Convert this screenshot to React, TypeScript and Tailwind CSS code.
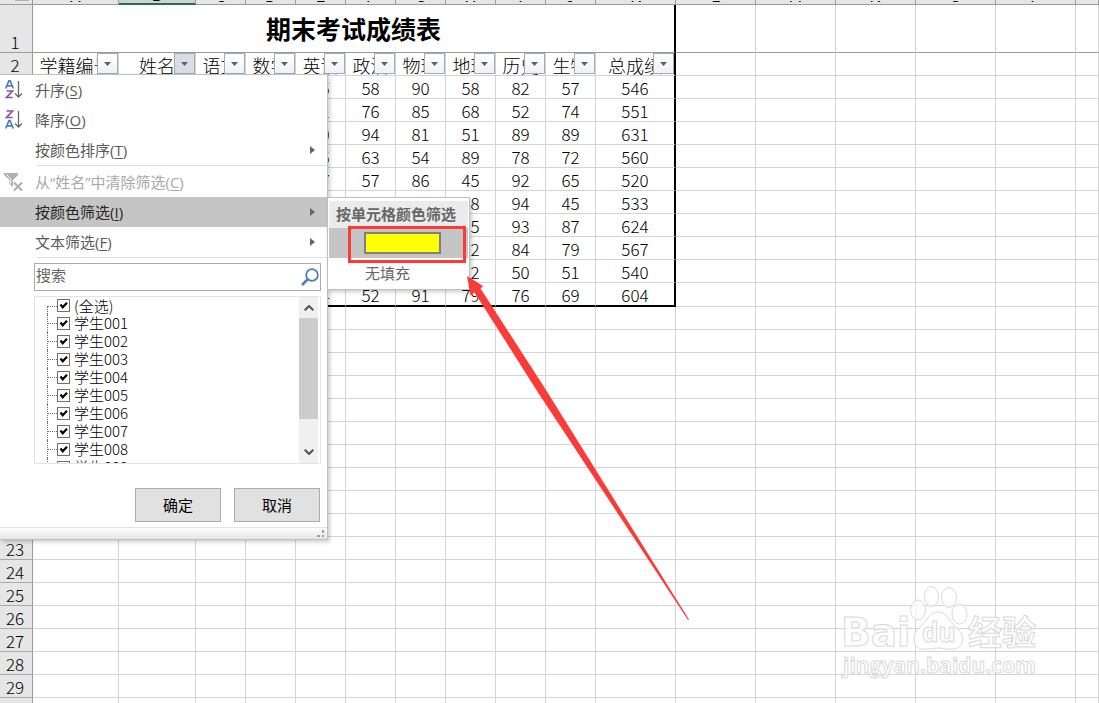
import type { ReactNode } from 'react';

interface FilterHeader {
  label: string;
  active?: boolean;
}

interface MenuItemProps {
  icon?: ReactNode;
  label: string;
  accessKey: string;
  submenu?: boolean;
  highlighted?: boolean;
  disabled?: boolean;
}

const columns = [
  { name: 'A', width: 'w-[86px]' },
  { name: 'B', width: 'w-[77px]' },
  { name: 'C', width: 'w-[50px]' },
  { name: 'D', width: 'w-[50px]' },
  { name: 'E', width: 'w-[50px]' },
  { name: 'F', width: 'w-[50px]' },
  { name: 'G', width: 'w-[50px]' },
  { name: 'H', width: 'w-[50px]' },
  { name: 'I', width: 'w-[50px]' },
  { name: 'J', width: 'w-[50px]' },
  { name: 'K', width: 'w-[80px]' },
  { name: 'L', width: 'w-[80px]' },
  { name: 'M', width: 'w-[80px]' },
  { name: 'N', width: 'w-[80px]' },
  { name: 'O', width: 'w-[80px]' },
  { name: 'P', width: 'w-[80px]' },
  { name: '', width: 'w-auto' },
];

const headers: FilterHeader[] = [
  { label: '学籍编号' },
  { label: '姓名', active: true },
  { label: '语文' },
  { label: '数学' },
  { label: '英语' },
  { label: '政治' },
  { label: '物理' },
  { label: '地理' },
  { label: '历史' },
  { label: '生物' },
  { label: '总成绩' },
];

// columns A to K
const scores = [
  ['', '', '', '', '75', '58', '90', '58', '82', '57', '546'],
  ['', '', '', '', '71', '76', '85', '68', '52', '74', '551'],
  ['', '', '', '', '80', '94', '81', '51', '89', '89', '631'],
  ['', '', '', '', '65', '63', '54', '89', '78', '72', '560'],
  ['', '', '', '', '77', '57', '86', '45', '92', '65', '520'],
  ['', '', '', '', '', '', '', '58', '94', '45', '533'],
  ['', '', '', '', '', '', '', '85', '93', '87', '624'],
  ['', '', '', '', '', '', '', '92', '84', '79', '567'],
  ['', '', '', '', '', '', '', '72', '50', '51', '540'],
  ['', '', '', '', '84', '52', '91', '79', '76', '69', '604'],
];

const students = [
  '(全选)',
  '学生001',
  '学生002',
  '学生003',
  '学生004',
  '学生005',
  '学生006',
  '学生007',
  '学生008',
  '学生009',
];

const emptyRows = Array.from({ length: 18 }, (_, i) => i + 13);

function RowNumber({ n, dark }: { n: number; dark?: boolean }) {
  return (
    <th
      scope="row"
      className={`border-r border-b border-r-[#9b9b9b] bg-[#e6e6e6] p-0 pr-0.5 align-bottom font-light leading-5 ${
        dark ? 'border-b-[#9b9b9b]' : 'border-b-[#ababab]'
      }`}
    >
      {n}
    </th>
  );
}

function Sheet() {
  return (
    <table className="w-full table-fixed border-separate border-spacing-0 text-[17px] font-light">
      <colgroup>
        <col className="w-[33px]" />
        {columns.map((col, i) => (
          <col key={i} className={col.width} />
        ))}
      </colgroup>
      <thead>
        <tr className="h-[5px]">
          <th className="border-r border-b border-[#9b9b9b] bg-[#e6e6e6] p-0">
            <div className="ml-[15px] h-1 w-3.5 border-t border-[#b1b1b1]" />
          </th>
          {columns.map((col, i) => (
            <th
              key={i}
              scope="col"
              className={`border-r border-r-[#9b9b9b] p-0 font-normal ${
                col.name === 'B'
                  ? 'border-b-2 border-b-[#217346] bg-[#d2d2d2]'
                  : 'border-b border-b-[#9b9b9b] bg-[#e6e6e6]'
              }`}
            >
              <div className="flex h-[3px] items-end justify-center overflow-hidden">
                <span className="leading-[18px]">{col.name}</span>
              </div>
            </th>
          ))}
        </tr>
      </thead>
      <tbody>
        <tr className="h-12">
          <RowNumber n={1} dark />
          <td
            colSpan={11}
            className="border-r-2 border-b border-r-black border-b-[#9b9b9b] p-0 pb-0.5 text-center text-[25px] font-bold leading-8"
          >
            期末考试成绩表
          </td>
          {columns.slice(11).map((col, i) => (
            <td key={i} className="border-r border-b border-r-[#d4d4d4] border-b-[#9b9b9b] p-0" />
          ))}
        </tr>
        <tr className="h-[23px]">
          <RowNumber n={2} />
          {headers.map((header, i) => (
            <th
              key={header.label}
              scope="col"
              className={`relative border-b border-b-[#d4d4d4] p-0 text-lg font-light ${
                i === 10 ? 'border-r-2 border-r-black' : 'border-r border-r-[#d4d4d4]'
              }`}
            >
              <div className="h-[22px] overflow-hidden pt-0.5 leading-5 whitespace-nowrap">{header.label}</div>
              <button
                type="button"
                aria-label={`筛选 ${header.label}`}
                className={`absolute top-0 right-0 flex size-[21px] items-center justify-center border border-[#a3abb8] ${
                  header.active
                    ? 'bg-[#d9dee6]'
                    : 'bg-linear-to-b from-white to-[#eef1f8]'
                }`}
              >
                <svg viewBox="0 0 7 4" className="h-1 w-[7px] fill-[#606060]">
                  <path d="M0 0h7L3.5 4z" />
                </svg>
              </button>
            </th>
          ))}
          {columns.slice(11).map((col, i) => (
            <td key={i} className="border-r border-b border-[#d4d4d4] p-0" />
          ))}
        </tr>
        {scores.map((row, r) => {
          const last = r === scores.length - 1;
          return (
            <tr key={r} className={last ? 'h-6' : 'h-[23px]'}>
              <RowNumber n={r + 3} />
              {row.map((value, c) => (
                <td
                  key={c}
                  className={`p-0 pt-0.5 text-center leading-5 ${
                    c === 10 ? 'border-r-2 border-r-black' : 'border-r border-r-[#d4d4d4]'
                  } ${last ? 'border-b-2 border-b-black' : 'border-b border-b-[#d4d4d4]'}`}
                >
                  {value}
                </td>
              ))}
              {columns.slice(11).map((col, i) => (
                <td key={i} className="border-r border-b border-[#d4d4d4] p-0" />
              ))}
            </tr>
          );
        })}
        {emptyRows.map((n) => (
          <tr key={n} className="h-[23px]">
            <RowNumber n={n} />
            {columns.map((col, i) => (
              <td key={i} className="border-r border-b border-[#d4d4d4] p-0" />
            ))}
          </tr>
        ))}
      </tbody>
    </table>
  );
}

function SortIcon({ descending }: { descending?: boolean }) {
  const letterA = 'M0.7 8.5L4 .5h1l3.3 8M2 5.8h5';
  const letterZ = 'M1.5 1h6L1.5 7.5h6.2';
  return (
    <svg viewBox="0 0 18 20" className="ml-px h-5 w-[18px] fill-none" strokeWidth="1.7">
      <path d={descending ? letterZ : letterA} stroke={descending ? '#8a54a8' : '#4a7ebb'} />
      <path
        d={descending ? letterA : letterZ}
        stroke={descending ? '#4a7ebb' : '#8a54a8'}
        transform="translate(0 10)"
      />
      <path d="M13.5 1v16M10 13.5l3.5 3.5 3.5-3.5" stroke="#666" strokeWidth="1.3" />
    </svg>
  );
}

function ClearFilterIcon() {
  return (
    <svg viewBox="0 0 20 20" className="size-5">
      <path d="M0 1h14v2L9 8v7L5.5 12V8L0 3z" fill="#b0b0b0" />
      <path d="M2.5 2.5L6.8 7v4.5" fill="none" stroke="#fff" />
      <path d="M10 10.5l8 8M18 10.5l-8 8" stroke="#b0b0b0" strokeWidth="2.2" />
    </svg>
  );
}

function MenuItem({ icon, label, accessKey, submenu, highlighted, disabled }: MenuItemProps) {
  return (
    <button
      type="button"
      disabled={disabled}
      className={`flex h-[30px] w-full items-center text-left text-[15px] ${
        highlighted ? 'bg-[#c5c5c5] text-[#262626]' : disabled ? 'text-[#a8a8a8]' : 'text-[#5a5a5a]'
      }`}
    >
      <span className="w-[35px] pl-1">{icon}</span>
      <span className="flex-1">
        {label}(<span className="underline underline-offset-2">{accessKey}</span>)
      </span>
      {submenu && (
        <svg viewBox="0 0 5 8" className="mr-3 h-2 w-[5px] fill-[#666]">
          <path d="M0 0l5 4-5 4z" />
        </svg>
      )}
    </button>
  );
}

function StudentList() {
  return (
    <div className="mt-[5px] ml-[34px] flex h-[168px] w-[287px] border border-[#e2e3e6] pr-0.5">
      <ul className="h-[166px] flex-1 overflow-hidden pl-3 text-[15px] text-black">
        {students.map((name, i) => (
          <li key={name} className={`flex items-center ${i === 0 ? 'h-[17px]' : 'h-[18px]'}`}>
            <span
              className={`w-2.5 border-l border-dotted border-[#707070] ${
                i === 0 ? 'h-2 self-end border-t' : 'h-[18px]'
              }`}
            >
              {i > 0 && <span className="block h-[10px] border-b border-dotted border-[#707070]" />}
            </span>
            <label className="flex items-center gap-1 font-[Noto_Sans_CJK_SC,sans-serif] leading-[18px] font-light whitespace-nowrap">
              <span className="grid">
                <input
                  type="checkbox"
                  defaultChecked
                  className="peer col-start-1 row-start-1 size-[13px] appearance-none border border-[#707070] bg-white"
                />
                <svg
                  viewBox="0 0 13 13"
                  className="pointer-events-none col-start-1 row-start-1 hidden size-[13px] fill-none stroke-black peer-checked:block"
                >
                  <path d="M3.5 5.5l2.2 2.8L10 3.8" strokeWidth="2.2" />
                </svg>
              </span>
              {name}
            </label>
          </li>
        ))}
      </ul>
      <div className="flex w-[19px] flex-col bg-[#f0f0f0]">
        <button type="button" aria-label="向上滚动" className="flex h-[21px] items-center justify-center">
          <svg viewBox="0 0 10 6" className="h-1.5 w-2.5 fill-none stroke-[#505050]">
            <path d="M.7 5.3L5 1l4.3 4.3" strokeWidth="2" />
          </svg>
        </button>
        <div className="h-[101px] bg-[#cdcdcd]" />
        <button type="button" aria-label="向下滚动" className="mt-auto flex h-[22px] items-center justify-center">
          <svg viewBox="0 0 10 6" className="h-1.5 w-2.5 fill-none stroke-[#505050]">
            <path d="M.7.7L5 5 9.3.7" strokeWidth="2" />
          </svg>
        </button>
      </div>
    </div>
  );
}

function FilterMenu() {
  return (
    <div className="absolute top-[74px] left-0 w-[328px] border-t border-r border-b border-[#c0c0c0] bg-white shadow-[2px_2px_4px_rgba(0,0,0,0.2)]">
      <MenuItem icon={<SortIcon />} label="升序" accessKey="S" />
      <MenuItem icon={<SortIcon descending />} label="降序" accessKey="O" />
      <MenuItem label="按颜色排序" accessKey="T" submenu />
      <div className="mb-px ml-[37px] border-t border-[#dfdfdf]" />
      <MenuItem icon={<ClearFilterIcon />} label="从“姓名”中清除筛选" accessKey="C" disabled />
      <MenuItem label="按颜色筛选" accessKey="I" submenu highlighted />
      <MenuItem label="文本筛选" accessKey="F" submenu />
      <div className="ml-[37px] border-t border-[#dfdfdf]" />

      {/* Search */}
      <div className="mt-[5px] ml-[34px] flex h-7 w-[287px] items-center border border-[#ababab] pr-px">
        <input
          type="text"
          aria-label="搜索"
          placeholder="搜索"
          className="min-w-0 flex-1 px-px pb-1 text-[15px] outline-none placeholder:text-[#666]"
        />
        <svg viewBox="0 0 18 18" className="size-[18px] fill-none stroke-[#4a7ebb]">
          <circle cx="11" cy="7" r="5.8" strokeWidth="1.8" />
          <path d="M7 11l-6 6" strokeWidth="2.5" />
        </svg>
      </div>

      <StudentList />

      <div className="mt-6 mr-[7px] flex justify-end gap-[13px] text-[15px] text-black">
        <button type="button" className="h-[34px] w-[86px] border border-[#adadad] bg-[#e1e1e1]">
          确定
        </button>
        <button type="button" className="h-[34px] w-[86px] border border-[#adadad] bg-[#e1e1e1]">
          取消
        </button>
      </div>

      {/* Resize strip */}
      <div className="mt-[5px] flex h-3 items-center justify-end border-t border-[#dde5ed] bg-linear-to-b from-white to-[#e4e5e7] pr-0.5">
        <svg viewBox="0 0 8 7" className="h-[7px] w-2 fill-[#a0a0a0]">
          <path d="M5 0h2v3H5zM0 5h3v2H0zM5 5h2v2H5z" />
        </svg>
      </div>
    </div>
  );
}

function ColorSubmenu() {
  return (
    <div className="absolute top-[197px] left-[327px] w-[143px] border border-[#c0c0c0] bg-white px-px pt-[3px] text-[15px] text-[#666] shadow-[2px_2px_4px_rgba(0,0,0,0.2)]">
      <div className="h-[27px] bg-[#ebebeb] pl-[7px] leading-[26px] font-bold whitespace-nowrap">
        按单元格颜色筛选
      </div>
      <button type="button" aria-label="黄色" className="flex h-[30px] w-full items-center bg-[#c5c5c5] pl-[35px]">
        <span className="h-[22px] w-[77px] border-2 border-[#808080] bg-[#ffff00]" />
      </button>
      <button type="button" className="flex h-[31px] w-full items-center pl-9">
        无填充
      </button>
    </div>
  );
}

function Annotations() {
  return (
    <>
      <div className="pointer-events-none absolute top-[226px] left-[348px] h-[37px] w-[118px] border-[3px] border-[#fb3b38]" />
      <svg
        viewBox="0 0 224 346"
        className="pointer-events-none absolute top-[275px] left-[466px] h-[346px] w-[224px] fill-[#fb3b38]"
      >
        <path d="M1 1L17 11l-2.5 2.5L80 115 223 344.500l-1 .5L73 119 8.500 17.500l-4 3z" />
      </svg>
    </>
  );
}

function Watermark() {
  return (
    <svg
      viewBox="0 0 204 100"
      className="pointer-events-none absolute right-[55px] bottom-[18px] h-[100px] w-[204px] fill-white/70 stroke-[#d9d9d9] font-[Open_Sans,Noto_Sans_CJK_SC,sans-serif] font-bold"
    >
      <text x="1" y="61" fontSize="39" fontFamily="DejaVu Sans">
        Bai
      </text>
      <ellipse cx="78" cy="25" rx="7.5" ry="10" />
      <ellipse cx="91.5" cy="11.5" rx="7" ry="10" />
      <ellipse cx="109" cy="12.5" rx="7.5" ry="10" />
      <ellipse cx="119.5" cy="29" rx="7.5" ry="10" />
      <path d="M98 27c10 0 11 10 18 15 9 7 9 20-2 22-6 1-10-1-16-1s-10 2-16 1c-10-2-11-15-2-22 7-5 8-15 18-15z" />
      <text x="82" y="57" fontSize="26">
        du
      </text>
      <text x="128" y="60" fontSize="34">
        经验
      </text>
      <text x="3" y="88" fontSize="21">
        jingyan.baidu.com
      </text>
    </svg>
  );
}

export default function App() {
  return (
    <main className="relative h-screen w-full overflow-hidden bg-white font-[Noto_Sans_CJK_SC,sans-serif] text-black">
      <Sheet />
      <div className="font-[Open_Sans,Noto_Sans_CJK_SC,sans-serif]">
        <FilterMenu />
        <ColorSubmenu />
      </div>
      <Annotations />
      <Watermark />
    </main>
  );
}
